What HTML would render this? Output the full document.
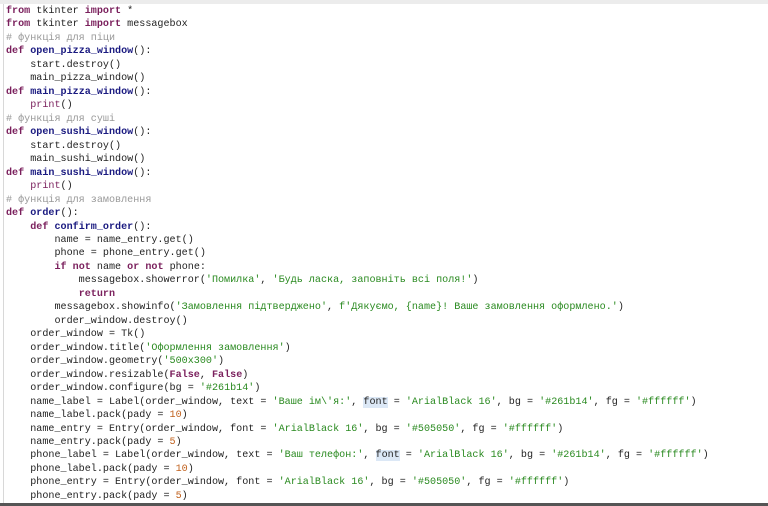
<!DOCTYPE html>
<html><head><meta charset="utf-8"><style>
html,body{margin:0;padding:0;background:#fff;}
body{width:768px;height:506px;overflow:hidden;position:relative;}
.top{position:absolute;left:0;top:0;width:768px;height:4px;background:#ececec;}
.lft{position:absolute;left:3px;top:4px;width:1px;height:500px;background:#d8d8d8;}
.bot{position:absolute;left:0;top:503px;width:768px;height:3px;background:#555;}
pre{position:absolute;left:6px;top:5px;margin:0;font-family:"Liberation Mono","DejaVu Sans Mono",monospace;font-size:10.1px;line-height:13.47px;color:#222;}
.k{color:#7a1f5c;font-weight:bold;}
.f{color:#1a1a80;font-weight:bold;}
.b{color:#7a1f5c;}
.c{color:#999;}
.s{color:#2a8a20;}
.n{color:#c0601c;}
.h{background:#dce8f6;}
</style></head><body>
<div class="top"></div><div class="lft"></div>
<pre><span class="k">from</span> tkinter <span class="k">import</span> *
<span class="k">from</span> tkinter <span class="k">import</span> messagebox
<span class="c"># функція для піци</span>
<span class="k">def</span> <span class="f">open_pizza_window</span>():
    start.destroy()
    main_pizza_window()
<span class="k">def</span> <span class="f">main_pizza_window</span>():
    <span class="b">print</span>()
<span class="c"># функція для суші</span>
<span class="k">def</span> <span class="f">open_sushi_window</span>():
    start.destroy()
    main_sushi_window()
<span class="k">def</span> <span class="f">main_sushi_window</span>():
    <span class="b">print</span>()
<span class="c"># функція для замовлення</span>
<span class="k">def</span> <span class="f">order</span>():
    <span class="k">def</span> <span class="f">confirm_order</span>():
        name = name_entry.get()
        phone = phone_entry.get()
        <span class="k">if</span> <span class="k">not</span> name <span class="k">or</span> <span class="k">not</span> phone:
            messagebox.showerror(<span class="s">'Помилка'</span>, <span class="s">'Будь ласка, заповніть всі поля!'</span>)
            <span class="k">return</span>
        messagebox.showinfo(<span class="s">'Замовлення підтверджено'</span>, <span class="s">f'Дякуємо, {name}! Ваше замовлення оформлено.'</span>)
        order_window.destroy()
    order_window = Tk()
    order_window.title(<span class="s">'Оформлення замовлення'</span>)
    order_window.geometry(<span class="s">'500x300'</span>)
    order_window.resizable(<span class="k">False</span>, <span class="k">False</span>)
    order_window.configure(bg = <span class="s">'#261b14'</span>)
    name_label = Label(order_window, text = <span class="s">'Ваше ім\'я:'</span>, <span class="h">font</span> = <span class="s">'ArialBlack 16'</span>, bg = <span class="s">'#261b14'</span>, fg = <span class="s">'#ffffff'</span>)
    name_label.pack(pady = <span class="n">10</span>)
    name_entry = Entry(order_window, font = <span class="s">'ArialBlack 16'</span>, bg = <span class="s">'#505050'</span>, fg = <span class="s">'#ffffff'</span>)
    name_entry.pack(pady = <span class="n">5</span>)
    phone_label = Label(order_window, text = <span class="s">'Ваш телефон:'</span>, <span class="h">font</span> = <span class="s">'ArialBlack 16'</span>, bg = <span class="s">'#261b14'</span>, fg = <span class="s">'#ffffff'</span>)
    phone_label.pack(pady = <span class="n">10</span>)
    phone_entry = Entry(order_window, font = <span class="s">'ArialBlack 16'</span>, bg = <span class="s">'#505050'</span>, fg = <span class="s">'#ffffff'</span>)
    phone_entry.pack(pady = <span class="n">5</span>)</pre>
<div class="bot"></div>
</body></html>
